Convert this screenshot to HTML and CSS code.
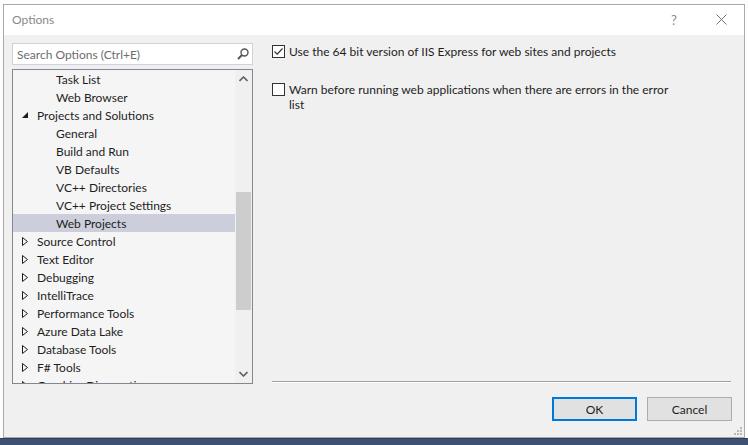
FILE: index.html
```html
<!DOCTYPE html>
<html lang="en">
<head>
    <meta charset="UTF-8">
    <title>Options</title>
    <link rel="stylesheet" href="styles.css">
</head>
<body>
    <div class="desk">
        <div class="dialog">
            <div class="titlebar">
                <span class="title">Options</span>
                <span class="help">?</span>
                <span class="close">
                    <svg width="11" height="11" viewBox="0 0 11 11"><path d="M0.5 0.5 L10.5 10.5 M10.5 0.5 L0.5 10.5" stroke="#707070" stroke-width="1" fill="none"/></svg>
                </span>
            </div>
            <div class="content">
                <div class="left">
                    <div class="search">
                        <span class="placeholder">Search Options (Ctrl+E)</span>
                        <svg class="glass" width="12" height="12" viewBox="0 0 12 12"><circle cx="7.5" cy="4.5" r="3.5" stroke="#555" stroke-width="1.4" fill="none"/><path d="M5 7 L1 11" stroke="#555" stroke-width="2" fill="none"/></svg>
                    </div>
                    <div class="tree">
                        <div class="rows" id="rows"></div>
                        <div class="scrollbar">
                            <svg class="arrow" width="9" height="6" viewBox="0 0 9 6"><path d="M0.5 5 L4.5 1 L8.5 5" stroke="#606060" stroke-width="1.6" fill="none"/></svg>
                            <div class="track"><div class="thumb"></div></div>
                            <svg class="arrow" width="9" height="6" viewBox="0 0 9 6"><path d="M0.5 1 L4.5 5 L8.5 1" stroke="#606060" stroke-width="1.6" fill="none"/></svg>
                        </div>
                    </div>
                </div>
                <div class="right">
                    <div class="options">
                        <label class="opt">
                            <span class="check on">
                                <svg width="11" height="11" viewBox="0 0 11 11"><path d="M1.5 5.5 L4.2 8.2 L9.5 2.5" stroke="#333" stroke-width="1.2" fill="none"/></svg>
                            </span>
                            <span>Use the 64 bit version of IIS Express for web sites and projects</span>
                        </label>
                        <label class="opt">
                            <span class="check"></span>
                            <span>Warn before running web applications when there are errors in the error list</span>
                        </label>
                    </div>
                    <div class="separator"></div>
                    <div class="footer">
                        <button class="default">OK</button>
                        <button>Cancel</button>
                    </div>
                </div>
            </div>
            <svg class="grip" width="8" height="8" viewBox="0 0 8 8" fill="#b8b8b8"><rect x="6" y="0" width="2" height="2"/><rect x="3" y="3" width="2" height="2"/><rect x="6" y="3" width="2" height="2"/><rect x="0" y="6" width="2" height="2"/><rect x="3" y="6" width="2" height="2"/><rect x="6" y="6" width="2" height="2"/></svg>
        </div>
    </div>
    <div class="taskbar"></div>

    <script>
        // level 1 = top category, level 2 = child page
        const items = [
            ['Task List', 2], ['Web Browser', 2], ['Projects and Solutions', 1, 'open'],
            ['General', 2], ['Build and Run', 2], ['VB Defaults', 2],
            ['VC++ Directories', 2], ['VC++ Project Settings', 2], ['Web Projects', 2, 'selected'],
            ['Source Control', 1, 'closed'], ['Text Editor', 1, 'closed'], ['Debugging', 1, 'closed'],
            ['IntelliTrace', 1, 'closed'], ['Performance Tools', 1, 'closed'], ['Azure Data Lake', 1, 'closed'],
            ['Database Tools', 1, 'closed'], ['F# Tools', 1, 'closed'], ['Graphics Diagnostics', 1, 'closed']
        ];

        const openIcon = '<svg width="6" height="6" viewBox="0 0 6 6"><path d="M6 0 L6 6 L0 6 Z" fill="#1e1e1e"/></svg>';
        const closedIcon = '<svg width="6" height="9" viewBox="0 0 6 9"><path d="M0.5 0.5 L5.5 4.5 L0.5 8.5 Z" stroke="#1e1e1e" stroke-width="1" fill="none"/></svg>';

        const rows = document.getElementById('rows');
        items.forEach(([name, level, state]) => {
            const row = document.createElement('div');
            row.className = 'row level' + level + (state === 'selected' ? ' selected' : '');
            let icon = '';
            if (state === 'open') icon = openIcon;
            if (state === 'closed') icon = closedIcon;
            row.innerHTML = `<span class="expander">${icon}</span><span class="label">${name}</span>`;
            rows.appendChild(row);
        });
    </script>
</body>
</html>
```

FILE: styles.css
```css
* {
    box-sizing: border-box;
    margin: 0;
    padding: 0;
}

body {
    font-family: 'Lato', 'Open Sans', sans-serif;
    font-size: 12px;
    color: #1e1e1e;
    background: #fdfdfd;
    width: 748px;
    height: 445px;
    overflow: hidden;
}

.desk {
    padding: 4px 3px 0 3px;
}

.dialog {
    position: relative;
    height: 434px;
    border: 1px solid #a9a9a9;
    background: #f0f0f0;
    display: flex;
    flex-direction: column;
}

.taskbar {
    height: 8px;
    background: #3d5272;
    border-top: 1px solid #2f3f58;
}

.titlebar {
    height: 30px;
    background: #fff;
    display: flex;
    align-items: center;
    padding-left: 8px;
    padding-bottom: 1px;
}

.title {
    flex: 1;
    color: #8a8a8a;
}

.help {
    color: #8a8a8a;
    font-size: 13px;
    width: 44px;
    text-align: center;
    margin-right: 2px;
}

.close {
    width: 46px;
    display: flex;
    justify-content: center;
}

.content {
    flex: 1;
    display: flex;
}

.left {
    width: 241px;
    margin-left: 8px;
    padding-top: 8px;
    display: flex;
    flex-direction: column;
    gap: 4px;
}

.search {
    height: 22px;
    border: 1px solid #cdd3dd;
    background: #fff;
    display: flex;
    align-items: center;
    padding: 0 3px 0 4px;
}

.placeholder {
    flex: 1;
    color: #6d6d6d;
}

.tree {
    height: 315px;
    border: 1px solid #828790;
    background: #f5f5f5;
    display: flex;
    overflow: hidden;
}

.rows {
    flex: 1;
    overflow: hidden;
}

.row {
    height: 18px;
    display: flex;
    align-items: center;
    white-space: nowrap;
}

.row.selected {
    background: #cccedb;
}

.expander {
    width: 10px;
    height: 18px;
    display: flex;
    align-items: center;
}

.level1 {
    padding-left: 9px;
}

.level2 {
    padding-left: 28px;
}

.label {
    margin-left: 5px;
}

.scrollbar {
    width: 17px;
    background: #f0f0f0;
    display: flex;
    flex-direction: column;
    align-items: center;
}

.arrow {
    margin: 6px 0;
}

.track {
    flex: 1;
    width: 100%;
    padding: 0 1px;
}

.thumb {
    margin-top: 104px;
    height: 118px;
    background: #cdcdcd;
}

.right {
    flex: 1;
    display: flex;
    flex-direction: column;
    padding: 0 12px 0 19px;
}

.options {
    flex: 1;
    padding-top: 9px;
    width: 405px;
}

.opt {
    display: flex;
    align-items: flex-start;
    line-height: 15px;
    margin-bottom: 23px;
}

.check {
    width: 13px;
    height: 13px;
    border: 1px solid #333;
    background: #fff;
    margin-right: 4px;
    margin-top: 1px;
    flex-shrink: 0;
    display: flex;
    align-items: center;
    justify-content: center;
}

.separator {
    height: 2px;
    border-top: 1px solid #a0a0a0;
    border-bottom: 1px solid #fff;
    margin-right: 1px;
}

.footer {
    display: flex;
    justify-content: flex-end;
    gap: 10px;
    margin: 14px 0 16px;
}

button {
    width: 85px;
    height: 24px;
    font-family: inherit;
    font-size: 12px;
    color: #1e1e1e;
    background: #e1e1e1;
    border: 1px solid #adadad;
}

button.default {
    border: 2px solid #0078d7;
}

.grip {
    position: absolute;
    right: 2px;
    bottom: 2px;
}
```
